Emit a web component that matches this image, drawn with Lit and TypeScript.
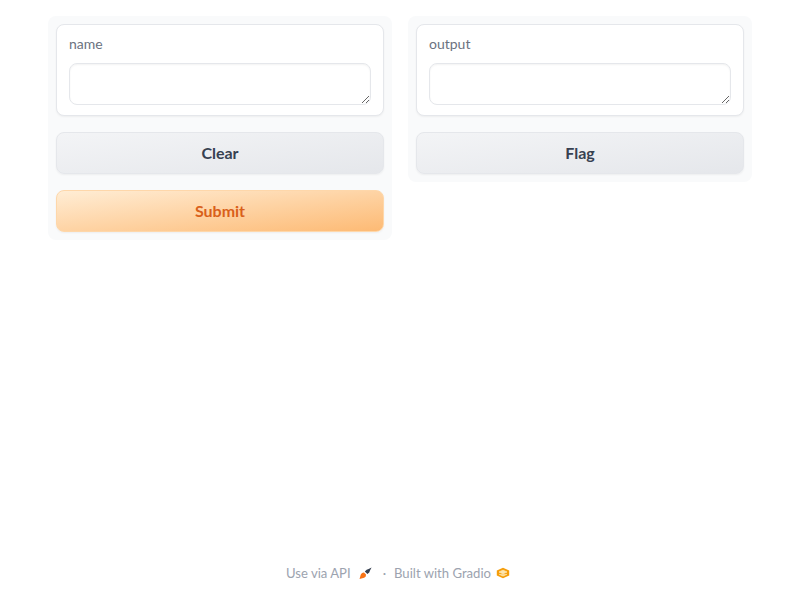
import { LitElement, html, css } from "lit";
import { customElement } from "lit/decorators.js";

@customElement("app-root")
export class AppRoot extends LitElement {
  static styles = css`
    :host { display: block; font-family: "Lato", "Noto Sans", sans-serif; }
    * { box-sizing: border-box; }
    .page { height: 600px; display: flex; flex-direction: column; justify-content: space-between; padding: 16px 48px 0; background: #fff; }
    .row { display: flex; gap: 16px; align-items: flex-start; }
    .col { flex: 1 1 0; display: flex; flex-direction: column; gap: 16px; padding: 8px; background: #f9fafb; border-radius: 8px; }
    .panel { background: #fff; border: 1px solid #e5e7eb; border-radius: 8px; padding: 12px; box-shadow: 0 1px 2px rgba(0,0,0,.05); height: 92px; }
    .label { display: block; font-size: 14px; line-height: 14px; color: #6b7280; margin: 0 0 12px; height: 14px; padding: 0; }
    textarea { display: block; width: 100%; height: 42px; border: 1px solid #e5e7eb; border-radius: 8px; background: #fff; outline: none; box-shadow: inset 0 1px 2px rgba(0,0,0,.05); }
    .btn { height: 42px; border-radius: 8px; font: 700 16px/1 "Lato", sans-serif; display: flex; align-items: center; justify-content: center; border: 1px solid #e5e7eb; box-shadow: 0 1px 2px rgba(0,0,0,.05); }
    .sec { color: #374151; background: linear-gradient(to bottom right, #f3f4f6, #e5e7eb); }
    .pri { color: #d9601a; border-color: #fed7aa; background: linear-gradient(to bottom right, #ffedd5, #fdba74); }
    footer { height: 37px; display: flex; align-items: flex-start; justify-content: center; color: #9ca3af; font-size: 13.1px; line-height: 20px; padding-right: 4px; }
    .item { display: flex; align-items: center; gap: 8px; }
    .item.gr { gap: 5px; }
    .dot { margin: 0 8px 0 10px; }
    svg { display: block; }
  `;
  render() {
    return html`<div class="page">
      <div class="row">
        <div class="col">
          <div class="panel"><span class="label">name</span><textarea></textarea></div>
          <div class="btn sec">Clear</div>
          <div class="btn pri">Submit</div>
        </div>
        <div class="col">
          <div class="panel"><span class="label">output</span><textarea></textarea></div>
          <div class="btn sec">Flag</div>
        </div>
      </div>
      <footer>
        <span class="item">Use via API
          <svg width="14" height="14" viewBox="0 0 14 14"><path d="M0.5 13 L1.8 8.6 Q3 6.4 5 6.6 L7 8.4 Q7.4 10.6 5.2 11.8 Z" fill="#f97316"/><path d="M5.8 5.6 Q7.6 3.4 9.6 3 L12.6 1.4 L11 4.4 Q10.8 6.4 8.4 8 Z" fill="#374151"/></svg>
        </span>
        <span class="dot">·</span>
        <span class="item gr">Built with Gradio
          <svg width="14" height="12" viewBox="0 0 14 12"><path d="M7 0.8 L13.2 3.6 V8.4 L7 11.2 L0.8 8.4 V3.6 Z" fill="#f59e0b"/><path d="M7 3.2 L11 5 L7 6.8 L3 5 Z M3 7.2 L7 9 L11 7.2" fill="#fde6b0" stroke="#fde6b0" stroke-width=".8" stroke-linejoin="round"/></svg>
        </span>
      </footer>
    </div>`;
  }
}
